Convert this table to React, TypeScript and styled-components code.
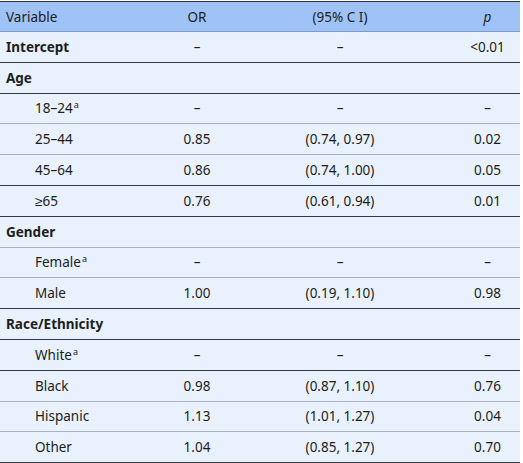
import React from 'react';
import styled, { createGlobalStyle } from 'styled-components';

const GlobalStyle = createGlobalStyle`
    html, body {
        margin: 0;
        padding: 0;
        background: #ffffff;
    }
    body {
        font-family: 'Noto Sans', 'Open Sans', sans-serif;
        color: #1d1d1d;
    }
`;

const Wrapper = styled.div`
    width: 520px;
    padding-top: 1px;
`;

const Table = styled.table`
    width: 100%;
    border-collapse: collapse;
    table-layout: fixed;
    font-size: 13.5px;
    background-color: #e8f1fc;
    border-top: 1.5px solid #333;
`;

const HeadRow = styled.tr`
    background-color: #9fc3f6;
    border-bottom: 1px solid #7e9cc4;
`;

const HeadCell = styled.th<{ $align?: string }>`
    height: 29px;
    padding: 0 6px;
    font-weight: 400;
    text-align: ${(p) => p.$align || 'center'};
`;

const Row = styled.tr<{ $dark?: boolean }>`
    border-bottom: ${(p) => (p.$dark ? '1.5px solid #363a3e' : '1px solid #a9b3be')};
`;

const LabelCell = styled.td<{ $bold?: boolean; $indent?: boolean }>`
    height: 29.8px;
    padding: 0 0 0 ${(p) => (p.$indent ? '35px' : '6px')};
    font-weight: ${(p) => (p.$bold ? 700 : 400)};
    white-space: nowrap;
`;

const Cell = styled.td`
    text-align: center;
    padding: 0;
`;

const Sup = styled.sup`
    font-size: 9px;
    vertical-align: 5px;
    line-height: 0;
    margin-left: 1px;
`;

const Geq = styled.span`
    font-family: 'Liberation Sans', sans-serif;
`;

const Italic = styled.span`
    font-style: italic;
`;

interface IRow {
    label: string;
    sup?: boolean;
    bold?: boolean;
    indent?: boolean;
    or?: string;
    ci?: string;
    p?: string;
    dark?: boolean;
}

const dash = '–';

const rows: IRow[] = [
    { label: 'Intercept', bold: true, or: dash, ci: dash, p: '<0.01', dark: true },
    { label: 'Age', bold: true, dark: true },
    { label: '18–24', sup: true, indent: true, or: dash, ci: dash, p: dash },
    { label: '25–44', indent: true, or: '0.85', ci: '(0.74, 0.97)', p: '0.02' },
    { label: '45–64', indent: true, or: '0.86', ci: '(0.74, 1.00)', p: '0.05', dark: true },
    { label: '≥65', indent: true, or: '0.76', ci: '(0.61, 0.94)', p: '0.01', dark: true },
    { label: 'Gender', bold: true },
    { label: 'Female', sup: true, indent: true, or: dash, ci: dash, p: dash },
    { label: 'Male', indent: true, or: '1.00', ci: '(0.19, 1.10)', p: '0.98', dark: true },
    { label: 'Race/Ethnicity', bold: true, dark: true },
    { label: 'White', sup: true, indent: true, or: dash, ci: dash, p: dash, dark: true },
    { label: 'Black', indent: true, or: '0.98', ci: '(0.87, 1.10)', p: '0.76' },
    { label: 'Hispanic', indent: true, or: '1.13', ci: '(1.01, 1.27)', p: '0.04' },
    { label: 'Other', indent: true, or: '1.04', ci: '(0.85, 1.27)', p: '0.70', dark: true },
];

function renderLabel(label: string) {
    if (label.startsWith('≥')) {
        return (
            <>
                <Geq>≥</Geq>
                {label.slice(1)}
            </>
        );
    }
    return label;
}

function App() {
    return (
        <Wrapper>
            <GlobalStyle />
            <Table>
                <colgroup>
                    <col style={{ width: 169 }} />
                    <col style={{ width: 56 }} />
                    <col style={{ width: 230 }} />
                    <col style={{ width: 65 }} />
                </colgroup>
                <thead>
                    <HeadRow>
                        <HeadCell $align="left">Variable</HeadCell>
                        <HeadCell>OR</HeadCell>
                        <HeadCell>(95% C I)</HeadCell>
                        <HeadCell>
                            <Italic>p</Italic>
                        </HeadCell>
                    </HeadRow>
                </thead>
                <tbody>
                    {rows.map((r) => (
                        <Row key={r.label} $dark={r.dark}>
                            <LabelCell $bold={r.bold} $indent={r.indent}>
                                {renderLabel(r.label)}
                                {r.sup && <Sup>a</Sup>}
                            </LabelCell>
                            <Cell>{r.or}</Cell>
                            <Cell>{r.ci}</Cell>
                            <Cell>{r.p}</Cell>
                        </Row>
                    ))}
                </tbody>
            </Table>
        </Wrapper>
    );
}

export default App;
